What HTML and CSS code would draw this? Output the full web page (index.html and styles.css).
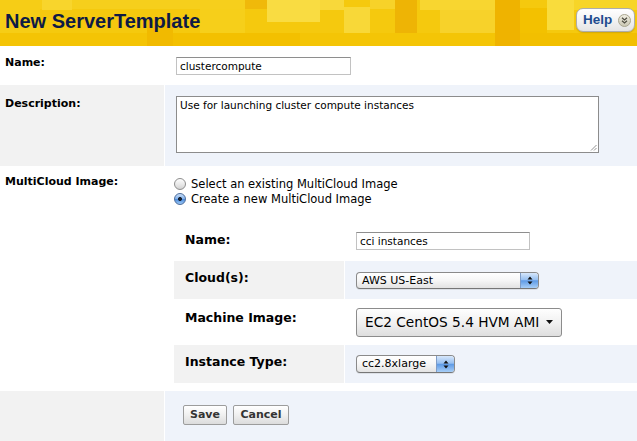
FILE: index.html
```html
<!DOCTYPE html>
<html>
<head>
<meta charset="utf-8">
<title>New ServerTemplate</title>
<link rel="stylesheet" href="styles.css">
</head>
<body>
<header class="hdr">
  <svg class="hdr-bg" width="637" height="46" viewBox="0 0 637 46" aria-hidden="true">
    <rect x="0" y="0" width="637" height="46" fill="#f5c90e"/>
    <rect x="0" y="0" width="42" height="9" fill="#f6cd16"/>
    <rect x="42" y="0" width="30" height="10" fill="#f8d52c"/>
    <rect x="72" y="0" width="173" height="9" fill="#f6cf1c"/>
    <rect x="245" y="0" width="22" height="9" fill="#f0b90a"/>
    <rect x="267" y="0" width="53" height="22" fill="#f9dc42"/>
    <rect x="320" y="0" width="24" height="10" fill="#f8d83a"/>
    <rect x="344" y="7" width="26" height="26" fill="#f8d838"/>
    <rect x="370" y="0" width="25" height="9" fill="#f7d229"/>
    <rect x="395" y="0" width="22" height="33" fill="#eeb405"/>
    <rect x="420" y="0" width="75" height="10" fill="#f8d630"/>
    <rect x="440" y="10" width="55" height="23" fill="#f7d22a"/>
    <rect x="0" y="9" width="40" height="24" fill="#f6cd16"/>
    <rect x="200" y="9" width="45" height="24" fill="#f6cf1a"/>
    <rect x="0" y="33" width="147" height="13" fill="#f4c405"/>
    <rect x="173" y="33" width="127" height="13" fill="#f3c000"/>
    <rect x="300" y="33" width="195" height="13" fill="#f4c506"/>
    <rect x="520" y="33" width="117" height="13" fill="#f2bf00"/>
    <rect x="147" y="20" width="26" height="26" fill="#f1ba00"/>
    <rect x="495" y="0" width="25" height="46" fill="#efb300"/>
    <rect x="520" y="8" width="27" height="25" fill="#f3c100"/>
    <rect x="547" y="0" width="27" height="30" fill="#f9dc3c"/>
    <rect x="574" y="0" width="63" height="10" fill="#f7d528"/>
  </svg>
  <h1 class="title">New ServerTemplate</h1>
  <button class="help" type="button">
    <span class="help-txt">Help</span>
    <span class="help-ico">
      <svg width="13" height="13" viewBox="0 0 13 13" aria-hidden="true">
        <defs>
          <linearGradient id="hg" x1="0" y1="0" x2="0" y2="1">
            <stop offset="0" stop-color="#f1efe3"/>
            <stop offset="1" stop-color="#c9c6b2"/>
          </linearGradient>
        </defs>
        <circle cx="6.5" cy="6.5" r="6" fill="url(#hg)" stroke="#a9a68f" stroke-width="1"/>
        <path d="M4 3.8 L6.5 6 L9 3.8 M4 6.8 L6.5 9 L9 6.8" fill="none" stroke="#4d4b40" stroke-width="1.2"/>
      </svg>
    </span>
  </button>
</header>

<main class="form">
  <div class="row r-name">
    <div class="lbl">Name:</div>
    <div class="val"><div class="field w175">clustercompute</div></div>
  </div>

  <div class="row r-desc">
    <div class="lbl">Description:</div>
    <div class="val">
      <div class="tarea">Use for launching cluster compute instances
        <svg class="grip" width="7" height="7" viewBox="0 0 7 7" aria-hidden="true">
          <path d="M6.5 1 L1 6.5 M6.5 4 L4 6.5" stroke="#777" stroke-width="0.8" fill="none"/>
        </svg>
      </div>
    </div>
  </div>

  <div class="row r-multi">
    <div class="lbl">MultiCloud Image:</div>
    <div class="val">
      <div class="radios">
        <div class="radio"><span class="rb"></span><span>Select an existing MultiCloud Image</span></div>
        <div class="radio"><span class="rb on"></span><span>Create a new MultiCloud Image</span></div>
      </div>

      <div class="inner">
        <div class="ilbl">Name:</div>
        <div class="ival"><div class="field w174">cci instances</div></div>

        <div class="ilbl g">Cloud(s):</div>
        <div class="ival b">
          <div class="sel w183">
            <span class="sel-txt">AWS US-East</span>
            <span class="step">
              <svg width="6" height="9" viewBox="0 0 6 9" aria-hidden="true"><path d="M0.5 3.5 L3 0.5 L5.5 3.5 Z M0.5 5.5 L3 8.5 L5.5 5.5 Z" fill="#111"/></svg>
            </span>
          </div>
        </div>

        <div class="ilbl">Machine Image:</div>
        <div class="ival">
          <div class="mbtn">
            <span>EC2 CentOS 5.4 HVM AMI</span>
            <svg width="7" height="4" viewBox="0 0 7 4" aria-hidden="true"><path d="M0 0 L7 0 L3.5 4 Z" fill="#111"/></svg>
          </div>
        </div>

        <div class="ilbl g">Instance Type:</div>
        <div class="ival b">
          <div class="sel w99 tall">
            <span class="sel-txt">cc2.8xlarge</span>
            <span class="step">
              <svg width="6" height="9" viewBox="0 0 6 9" aria-hidden="true"><path d="M0.5 3.5 L3 0.5 L5.5 3.5 Z M0.5 5.5 L3 8.5 L5.5 5.5 Z" fill="#111"/></svg>
            </span>
          </div>
        </div>
      </div>
    </div>
  </div>

  <div class="row r-btns">
    <div class="lbl"></div>
    <div class="val">
      <button class="btn w44" type="button">Save</button>
      <button class="btn w56" type="button">Cancel</button>
    </div>
  </div>
</main>
</body>
</html>
```

FILE: styles.css
```css
* { box-sizing: border-box; margin: 0; padding: 0; }
html, body { width: 637px; height: 441px; overflow: hidden; background: #fff; }
body { font-family: "DejaVu Sans", Verdana, sans-serif; color: #000; }

/* header */
.hdr {
  position: relative;
  height: 46px;
  display: flex;
  align-items: flex-start;
  justify-content: space-between;
  padding: 0 2px 0 5px;
  overflow: hidden;
}
.hdr-bg { position: absolute; left: 0; top: 0; }
.title {
  position: relative;
  margin-top: 10px;
  font: bold 20px/23px "Liberation Sans", Arial, sans-serif;
  color: #0e1a45;
}
.help {
  position: relative;
  margin-top: 8px;
  width: 59px;
  height: 24px;
  display: flex;
  align-items: center;
  padding-left: 6px;
  gap: 6px;
  border: 1px solid #adadad;
  border-radius: 7px;
  background: linear-gradient(#ffffff, #f3f3f3 50%, #e4e4e4);
  box-shadow: 0 1px 1px rgba(150, 110, 0, 0.35);
  cursor: pointer;
}
.help-txt {
  font: bold 13.5px/16px "Liberation Sans", Arial, sans-serif;
  color: #1f4c8f;
}
.help-ico { display: flex; }

/* form rows */
.row { display: grid; grid-template-columns: 164px 1fr; column-gap: 1px; }
.lbl { font-weight: bold; font-size: 11px; line-height: 14px; padding-left: 5px; }
.val { padding-left: 11px; }

.r-name { height: 39px; }
.r-name .lbl { padding-top: 10px; }
.r-name .val { padding-top: 11px; }

.r-desc { height: 81px; }
.r-desc .lbl { background: #f2f2f2; padding-top: 12px; }
.r-desc .val { background: #eff3fa; padding-top: 11px; }

.r-multi { height: 225px; }
.r-multi .lbl { padding-top: 9px; }
.r-multi .val { padding: 10px 0 0 9px; }

.r-btns { height: 50px; }
.r-btns .lbl { background: #f2f2f2; }
.r-btns .val {
  background: #eff3fa;
  padding: 14px 0 0 18px;
  display: flex;
  align-items: flex-start;
  gap: 6px;
}

/* text fields */
.field {
  height: 18px;
  border: 1px solid #c2c2c2;
  border-top-color: #8e8e8e;
  background: #fff;
  font-size: 10.5px;
  line-height: 16px;
  padding-left: 3px;
}
.w175 { width: 175px; }
.w174 { width: 174px; }

.tarea {
  position: relative;
  width: 423px;
  height: 57px;
  border: 1px solid #8c8c8c;
  background: #fff;
  font-size: 10.5px;
  line-height: 13px;
  padding: 2px 3px;
}
.grip { position: absolute; right: 1px; bottom: 1px; }

/* radios */
.radios { display: flex; flex-direction: column; }
.radio {
  display: flex;
  align-items: center;
  gap: 5px;
  height: 15px;
  font-size: 11.5px;
}
.rb {
  width: 12px;
  height: 12px;
  border-radius: 50%;
  border: 1px solid #8d8d8d;
  background: linear-gradient(#fdfdfd, #e6e6e6 60%, #d2d2d2);
  flex: none;
}
.rb.on {
  border-color: #4d6d9c;
  background:
    radial-gradient(circle, #17202e 0, #17202e 1.6px, transparent 2.3px),
    linear-gradient(#c9def8, #7fb0ec 50%, #4e8ddd 55%, #9cc8f5);
}

/* inner table */
.inner {
  margin-top: 17px;
  display: grid;
  grid-template-columns: 170px 1fr;
  grid-template-rows: 36px 38px 42px 38px;
  column-gap: 1px;
  row-gap: 2px;
}
.ilbl {
  font-size: 12.5px;
  font-weight: bold;
  line-height: 17px;
  padding: 8px 0 0 11px;
}
.ival { display: flex; align-items: center; padding-left: 11px; }
.g { background: #f2f2f2; }
.b { background: #eff3fa; }

/* aqua selects */
.sel {
  height: 17px;
  display: flex;
  border: 1px solid #8a8a8a;
  border-bottom-color: #767676;
  border-radius: 4px;
  background: linear-gradient(#ffffff, #f6f6f6 50%, #e3e3e3);
  overflow: hidden;
  box-shadow: 0 1px 0 rgba(0, 0, 0, 0.08);
}
.sel.tall { height: 18px; }
.w183 { width: 183px; }
.w99 { width: 99px; }
.sel-txt {
  flex: 1;
  font-size: 11px;
  line-height: 15px;
  padding-left: 5px;
  white-space: nowrap;
}
.step {
  width: 18px;
  display: flex;
  align-items: center;
  justify-content: center;
  border-left: 1px solid #7f9cc6;
  background: linear-gradient(#d7e7fb, #97c0f1 45%, #5f9be6 52%, #a7cef7);
}

/* machine image button */
.mbtn {
  width: 206px;
  height: 29px;
  display: flex;
  align-items: center;
  gap: 7px;
  padding-left: 8px;
  border: 1px solid #8c8c8c;
  border-radius: 3px;
  background: linear-gradient(#fefefe, #f1f1f1 50%, #dedede);
  font-size: 13.7px;
  white-space: nowrap;
}

/* buttons */
.btn {
  height: 20px;
  border: 1px solid #9c9c9c;
  border-radius: 2px;
  background: linear-gradient(#ffffff, #f0f0f0 50%, #dcdcdc);
  font: bold 11px/18px "DejaVu Sans", Verdana, sans-serif;
  color: #333;
  text-align: center;
  cursor: pointer;
}
.w44 { width: 44px; }
.w56 { width: 56px; }
```
